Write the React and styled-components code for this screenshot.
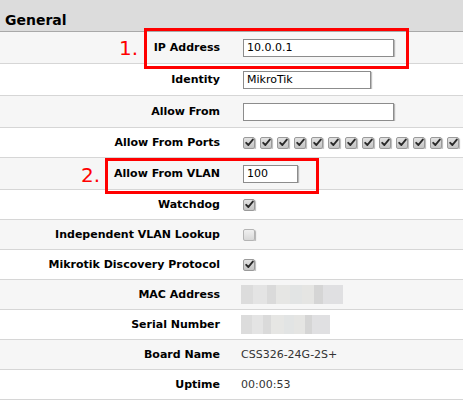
import React from "react";
import styled, { createGlobalStyle } from "styled-components";

const Global = createGlobalStyle`
  html, body { margin: 0; padding: 0; background: #fff; overflow: hidden; }
  body { font-family: "DejaVu Sans", Verdana, sans-serif; }
`;

const Panel = styled.div`
  position: relative;
  width: 463px;
`;

const Header = styled.div`
  height: 32px;
  box-sizing: border-box;
  background: #dcdcdc;
  border-bottom: 1px solid #a9a9a9;
  padding: 10px 0 0 5px;
  font-size: 14px;
  font-weight: bold;
  color: #000;
  line-height: 20px;
`;

const Row = styled.div`
  display: flex;
  align-items: center;
  height: ${(p) => (p.$tall ? 32 : 30)}px;
  box-sizing: border-box;
  border-bottom: 1px solid #d6d6d6;
  background: ${(p) => (p.$shade ? "#f6f6f6" : "#fff")};
`;

const Label = styled.div`
  flex: 0 0 231px;
  box-sizing: border-box;
  padding-right: 11px;
  text-align: right;
  font-size: 11px;
  font-weight: bold;
  color: #000;
  white-space: nowrap;
`;

const Value = styled.div`
  flex: 1;
  min-width: 0;
  padding-left: 10px;
  display: flex;
  align-items: center;
  gap: 5px;
  overflow: hidden;
  white-space: nowrap;
  font-size: 11px;
  color: #333;
`;

const TextInput = styled.input`
  box-sizing: border-box;
  width: ${(p) => p.$w}px;
  height: 18px;
  margin: 0 0 0 2px;
  padding: 0 3px;
  border: 1px solid #8c8c8c;
  box-shadow: 1px 1px 1px rgba(0, 0, 0, 0.25);
  background: #fff;
  font-family: "DejaVu Sans", Verdana, sans-serif;
  font-size: 11px;
  color: #000;
  outline: none;
`;

const Box = styled.span`
  flex: 0 0 auto;
  display: inline-flex;
  align-items: center;
  justify-content: center;
  box-sizing: border-box;
  width: 12px;
  height: 12px;
  margin-left: ${(p) => (p.$first ? 2 : 0)}px;
  border: 1px solid ${(p) => (p.$on ? "#9a9a9a" : "#b4b4b4")};
  border-radius: 2px;
  background: ${(p) =>
    p.$on
      ? "linear-gradient(#e2e2e2, #c4c4c4)"
      : "linear-gradient(#f0f0f0, #d8d8d8)"};
  box-shadow: 1px 1px 1px rgba(0, 0, 0, 0.28);
`;

const Blur = styled.div`
  width: ${(p) => p.$w}px;
  height: 19px;
  background: linear-gradient(
    90deg,
    #dcdcdc 0 12%,
    #e4e4e4 12% 25%,
    #dadada 25% 34%,
    #e6e6e4 34% 48%,
    #e2e4e4 48% 60%,
    #e5e5e3 60% 72%,
    #d5d5d5 72% 80%,
    #e0e0e2 80% 100%
  );
`;

const Frame = styled.div`
  position: absolute;
  left: ${(p) => p.$x}px;
  top: ${(p) => p.$y}px;
  width: ${(p) => p.$w}px;
  height: ${(p) => p.$h}px;
  box-sizing: border-box;
  border: 3px solid #f00;
  pointer-events: none;
`;

const Mark = styled.div`
  position: absolute;
  left: ${(p) => p.$x}px;
  top: ${(p) => p.$y}px;
  font-size: 20px;
  line-height: 20px;
  color: #f00;
`;

const Check = ({ on, first }) => (
  <Box $on={on} $first={first}>
    {on && (
      <svg width="9" height="9" viewBox="0 0 9 9">
        <path
          d="M1.2 4.8 L3.4 7 L7.8 1.6"
          fill="none"
          stroke="#2a2a2a"
          strokeWidth="1.9"
          strokeLinecap="round"
          strokeLinejoin="round"
        />
      </svg>
    )}
  </Box>
);

export default function App() {
  const ports = Array.from({ length: 26 });
  return (
    <>
      <Global />
      <Panel>
        <Header>General</Header>
        <Row $shade $tall>
          <Label>IP Address</Label>
          <Value>
            <TextInput $w={151} defaultValue="10.0.0.1" readOnly />
          </Value>
        </Row>
        <Row $tall>
          <Label>Identity</Label>
          <Value>
            <TextInput $w={128} defaultValue="MikroTik" readOnly />
          </Value>
        </Row>
        <Row $shade $tall>
          <Label>Allow From</Label>
          <Value>
            <TextInput $w={151} defaultValue="" readOnly />
          </Value>
        </Row>
        <Row>
          <Label>Allow From Ports</Label>
          <Value>
            {ports.map((_, i) => (
              <Check key={i} on first={i === 0} />
            ))}
          </Value>
        </Row>
        <Row $shade $tall>
          <Label>Allow From VLAN</Label>
          <Value>
            <TextInput $w={55} defaultValue="100" readOnly />
          </Value>
        </Row>
        <Row>
          <Label>Watchdog</Label>
          <Value>
            <Check on first />
          </Value>
        </Row>
        <Row $shade>
          <Label>Independent VLAN Lookup</Label>
          <Value>
            <Check first />
          </Value>
        </Row>
        <Row>
          <Label>Mikrotik Discovery Protocol</Label>
          <Value>
            <Check on first />
          </Value>
        </Row>
        <Row $shade>
          <Label>MAC Address</Label>
          <Value>
            <Blur $w={102} />
          </Value>
        </Row>
        <Row>
          <Label>Serial Number</Label>
          <Value>
            <Blur $w={89} />
          </Value>
        </Row>
        <Row $shade>
          <Label>Board Name</Label>
          <Value>CSS326-24G-2S+</Value>
        </Row>
        <Row>
          <Label>Uptime</Label>
          <Value>00:00:53</Value>
        </Row>

        <Frame $x={144} $y={28} $w={265} $h={41} />
        <Mark $x={119} $y={38}>1.</Mark>
        <Frame $x={105} $y={158} $w={214} $h={36} />
        <Mark $x={81} $y={165}>2.</Mark>
      </Panel>
    </>
  );
}
